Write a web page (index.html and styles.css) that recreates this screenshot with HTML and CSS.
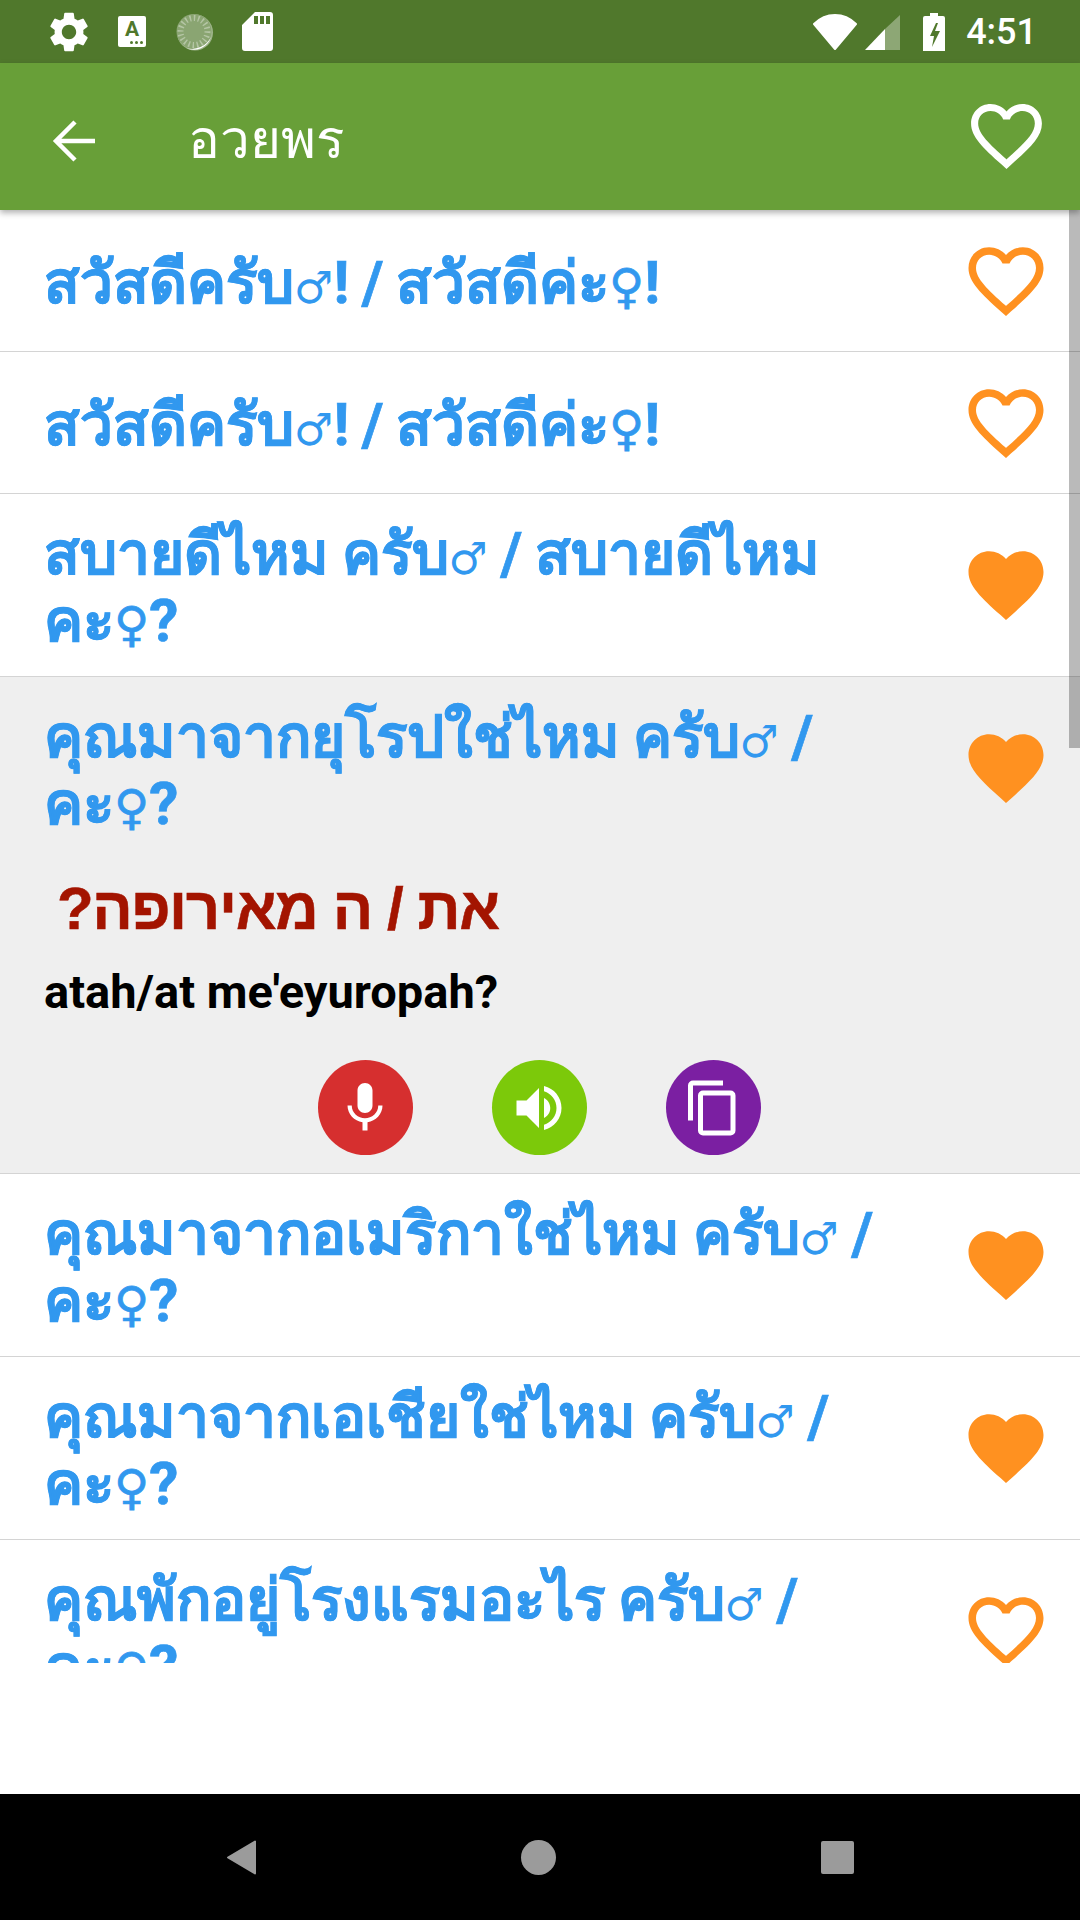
FILE: index.html
```html
<!DOCTYPE html>
<html lang="th">
<head>
    <meta charset="UTF-8">
    <meta name="viewport" content="width=device-width, initial-scale=1.0">
    <title>อวยพร</title>
    <link rel="stylesheet" href="styles.css">
</head>
<body>
    <div class="screen">
        <div class="status-bar">
            <div class="status-left">
                <svg class="gear" viewBox="2.500 2 19 20"><path d="M19.140 12.940c.04-.3.06-.61.06-.94 0-.32-.02-.64-.07-.94l2.030-1.580a.49.49 0 0 0 .12-.61l-1.920-3.320a.49.49 0 0 0-.59-.22l-2.390.96c-.5-.38-1.030-.7-1.620-.94l-.36-2.540a.48.48 0 0 0-.48-.41h-3.840c-.24 0-.43.17-.47.41l-.36 2.540c-.59.24-1.130.57-1.620.94l-2.390-.96c-.22-.08-.47 0-.59.22L2.740 8.870c-.12.21-.08.47.12.61l2.030 1.580c-.05.3-.09.63-.09.94s.02.64.07.94l-2.030 1.580a.49.49 0 0 0-.12.61l1.920 3.320c.12.22.37.29.59.22l2.390-.96c.5.38 1.030.7 1.620.94l.36 2.540c.05.24.24.41.48.41h3.840c.24 0 .44-.17.47-.41l.36-2.540c.59-.24 1.130-.56 1.620-.94l2.390.96c.22.08.47 0 .59-.22l1.920-3.320c.12-.22.07-.47-.12-.61l-2.010-1.580zM12 15.600c-1.980 0-3.600-1.620-3.600-3.600s1.620-3.600 3.600-3.600 3.600 1.620 3.600 3.600-1.620 3.600-3.600 3.600z"/></svg>
                <div class="a-icon">A<svg class="a-dots" viewBox="0 0 13 3"><circle cx="1.500" cy="1.500" r="1.500"/><circle cx="6.500" cy="1.500" r="1.500"/><circle cx="11.500" cy="1.500" r="1.500"/></svg></div>
                <svg class="loader" viewBox="0 0 38 38">
                    <circle cx="19" cy="19.500" r="18" fill="#fff" opacity=".45"/>
                    <circle cx="18" cy="18.500" r="17.500" fill="#8aa572"/>
                    <circle cx="18" cy="18.500" r="13.500" fill="none" stroke="#b4c5a4" stroke-width="6" stroke-dasharray="1.500 2.700"/>
                    <path d="M35 24a18 18 0 0 1-25 11 21 21 0 0 0 25-11z" fill="#fff"/>
                </svg>
                <svg class="sd-card" viewBox="0 0 31 39"><path fill-rule="evenodd" d="M13 0h15a3 3 0 0 1 3 3v33a3 3 0 0 1-3 3H3a3 3 0 0 1-3-3V13zM12 4v8h4V4zm6 0v8h4V4zm6 0v8h4V4z"/></svg>
            </div>
            <div class="status-right">
                <svg class="wifi" viewBox="0 0 44 36"><path d="M22 35 1 10C7 4 14 1 22 1s15 3 21 9z" stroke="#fff" stroke-width="2" stroke-linejoin="round"/></svg>
                <svg class="signal" viewBox="0 0 35 35"><path d="M35 0v35H20V14z" opacity=".35"/><path d="M20 14v21H0z"/></svg>
                <svg class="battery" viewBox="0 0 22 38"><path fill-rule="evenodd" d="M7 0h8v3h5a2 2 0 0 1 2 2v33H0V5a2 2 0 0 1 2-2h5zm6 10-6 13h4l-2 11 8-16h-5l3-8z"/></svg>
                <span class="clock">4:51</span>
            </div>
        </div>

        <div class="toolbar">
            <svg class="back" viewBox="0 0 44 44"><path d="M43 22H5M23 3 4 22l19 19" fill="none" stroke="#fff" stroke-width="4.500"/></svg>
            <div class="title">อวยพร</div>
            <svg class="fav-all" viewBox="2 3 20 18.350"><use href="#heart-line"/></svg>
        </div>

        <div class="list">
            <div class="row">
                <div class="phrase">สวัสดีครับ<span class="male">♂</span>! / สวัสดีค่ะ<span class="female">♀</span>!</div>
                <svg class="heart" viewBox="0 0 24 24"><use href="#heart-line"/></svg>
            </div>
            <div class="row">
                <div class="phrase">สวัสดีครับ<span class="male">♂</span>! / สวัสดีค่ะ<span class="female">♀</span>!</div>
                <svg class="heart" viewBox="0 0 24 24"><use href="#heart-line"/></svg>
            </div>
            <div class="row">
                <div class="phrase">สบายดีไหม ครับ<span class="male">♂</span> / สบายดีไหม <span>คะ</span><span class="female">♀</span>?</div>
                <svg class="heart" viewBox="0 0 24 24"><use href="#heart-full"/></svg>
            </div>
            <div class="row-open">
                <div class="row row-head">
                    <div class="phrase">คุณมาจากยุโรปใช่ไหม ครับ<span class="male">♂</span> / <span>คะ</span><span class="female">♀</span>?</div>
                    <svg class="heart" viewBox="0 0 24 24"><use href="#heart-full"/></svg>
                </div>
                <div class="hebrew" dir="rtl">את / ה מאירופה?</div>
                <div class="translit">atah/at me'eyuropah?</div>
                <div class="actions">
                    <div class="action red">
                        <svg viewBox="0 0 24 24"><path d="M12 14c1.660 0 3-1.340 3-3V5c0-1.660-1.340-3-3-3S9 3.340 9 5v6c0 1.660 1.340 3 3 3zm5.300-3c0 3-2.540 5.100-5.300 5.100S6.700 14 6.700 11H5c0 3.410 2.720 6.230 6 6.720V21h2v-3.280c3.280-.48 6-3.300 6-6.720h-1.700z"/></svg>
                    </div>
                    <div class="action green">
                        <svg viewBox="0 0 24 24"><path d="M3 9v6h4l5 5V4L7 9H3zm13.500 3c0-1.770-1.020-3.290-2.500-4.030v8.050c1.480-.73 2.500-2.250 2.500-4.020zM14 3.230v2.060c2.890.86 5 3.540 5 6.710s-2.110 5.850-5 6.710v2.060c4.010-.91 7-4.490 7-8.770s-2.990-7.860-7-8.770z"/></svg>
                    </div>
                    <div class="action purple">
                        <svg viewBox="0 0 24 24"><path d="M16 1H4a2 2 0 0 0-2 2v14h2V3h12V1zm3 4H8a2 2 0 0 0-2 2v14a2 2 0 0 0 2 2h11a2 2 0 0 0 2-2V7a2 2 0 0 0-2-2zm0 16H8V7h11v14z"/></svg>
                    </div>
                </div>
            </div>
            <div class="row">
                <div class="phrase">คุณมาจากอเมริกาใช่ไหม ครับ<span class="male">♂</span> / <span>คะ</span><span class="female">♀</span>?</div>
                <svg class="heart" viewBox="0 0 24 24"><use href="#heart-full"/></svg>
            </div>
            <div class="row">
                <div class="phrase">คุณมาจากเอเชียใช่ไหม ครับ<span class="male">♂</span> / <span>คะ</span><span class="female">♀</span>?</div>
                <svg class="heart" viewBox="0 0 24 24"><use href="#heart-full"/></svg>
            </div>
            <div class="row">
                <div class="phrase">คุณพักอยู่โรงแรมอะไร ครับ<span class="male">♂</span> / <span>คะ</span><span class="female">♀</span>?</div>
                <svg class="heart" viewBox="0 0 24 24"><use href="#heart-line"/></svg>
            </div>
            <div class="scrollbar"></div>
        </div>

        <div class="spacer"></div>

        <div class="nav-bar">
            <svg class="nav-icon" viewBox="0 0 30 35"><path d="M29 1.500v32L2 17.500z" fill="#9b9b9b" stroke="#9b9b9b" stroke-width="2" stroke-linejoin="round"/></svg>
            <div class="nav-home"></div>
            <div class="nav-recent"></div>
        </div>
    </div>

    <svg class="defs" width="0" height="0">
        <defs>
            <path id="heart-line" d="M16.500 3c-1.740 0-3.410.81-4.500 2.090C10.910 3.810 9.240 3 7.500 3 4.420 3 2 5.420 2 8.500c0 3.780 3.400 6.860 8.550 11.540L12 21.350l1.450-1.320C18.600 15.360 22 12.280 22 8.500 22 5.420 19.580 3 16.500 3zm-4.400 15.550l-.1.100-.1-.1C7.140 14.240 4 11.390 4 8.500 4 6.500 5.500 5 7.500 5c1.540 0 3.040.99 3.570 2.360h1.870C13.460 5.990 14.960 5 16.500 5c2 0 3.500 1.500 3.500 3.500 0 2.890-3.140 5.740-7.900 10.050z"/>
            <path id="heart-full" d="M12 21.350l-1.450-1.320C5.400 15.360 2 12.280 2 8.500 2 5.420 4.420 3 7.500 3c1.740 0 3.410.81 4.500 2.090C13.090 3.810 14.760 3 16.500 3 19.580 3 22 5.420 22 8.500c0 3.780-3.400 6.860-8.550 11.540L12 21.350z"/>
        </defs>
    </svg>
</body>
</html>
```

FILE: styles.css
```css
body {
    margin: 0;
    font-family: 'Roboto', 'Noto Sans', 'DejaVu Sans', sans-serif;
    background-color: #fff;
}

.screen {
    width: 1080px;
    height: 1920px;
    display: flex;
    flex-direction: column;
    overflow: hidden;
}

.status-bar {
    height: 63px;
    flex: none;
    display: flex;
    justify-content: space-between;
    align-items: center;
    padding: 0 43px 0 50px;
    background-color: #50782c;
}

.status-left,
.status-right {
    display: flex;
    align-items: center;
}

.status-left {
    gap: 30px;
    fill: #fff;
}

.status-right {
    gap: 8px;
    fill: #fff;
}

.gear {
    width: 38px;
    height: 40px;
}

.a-icon {
    position: relative;
    width: 28px;
    height: 31px;
    background-color: #fff;
    border-radius: 2px;
    color: #50782c;
    font-size: 21px;
    font-weight: bold;
    line-height: 26px;
    text-align: center;
}

.a-dots {
    position: absolute;
    right: 3px;
    bottom: 3px;
    width: 13px;
    height: 3px;
    fill: #50782c;
}

.loader {
    width: 38px;
    height: 38px;
    margin-right: -2px;
}

.sd-card {
    width: 31px;
    height: 39px;
}

.wifi {
    width: 44px;
    height: 36px;
}

.signal {
    width: 35px;
    height: 35px;
    margin-top: 2px;
}

.battery {
    width: 22px;
    height: 38px;
    margin-left: 15px;
}

.clock {
    margin-left: 13px;
    color: #fff;
    font-size: 36px;
    font-weight: 500;
}

.toolbar {
    height: 147px;
    flex: none;
    display: flex;
    align-items: center;
    padding: 0 38px 0 52px;
    background-color: #689f38;
    box-shadow: 0 3px 6px rgba(0, 0, 0, 0.3);
    position: relative;
}

.back {
    width: 44px;
    height: 44px;
    margin-top: 9px;
}

.title {
    flex: 1;
    margin-left: 92px;
    padding-top: 5px;
    color: #fff;
    font-size: 53px;
}

.fav-all {
    width: 71px;
    height: 65px;
    fill: #fff;
}

.list {
    height: 1453px;
    flex: none;
    overflow: hidden;
    position: relative;
}

.row {
    display: flex;
    align-items: center;
    min-height: 142px;
    padding: 24px 29px 24px 44px;
    border-bottom: 1px solid #d4d4d4;
    box-sizing: border-box;
}

.phrase {
    flex: 1;
    position: relative;
    top: 3px;
    color: #3198ef;
    font-size: 58.5px;
    font-weight: bold;
    line-height: 67px;
    word-spacing: -2px;
    -webkit-text-stroke: 0.7px #3198ef;
}

.male {
    font-family: 'DejaVu Sans', sans-serif;
    font-size: 44px;
    font-weight: normal;
    line-height: 0;
    -webkit-text-stroke: 0;
}

.female {
    font-size: 48px;
    line-height: 0;
}

.heart {
    width: 90px;
    height: 90px;
    flex: none;
    margin-left: 31px;
    fill: #ff9120;
}

.row-open {
    background-color: #efefef;
    border-bottom: 1px solid #d4d4d4;
}

.row-head {
    border-bottom: none;
}

.hebrew {
    width: fit-content;
    margin-top: 15px;
    margin-left: 57px;
    color: #a31400;
    font-family: 'Liberation Sans', sans-serif;
    font-size: 60px;
    font-weight: bold;
    line-height: 70px;
    letter-spacing: -1.4px;
    -webkit-text-stroke: 0.5px #a31400;
}

.translit {
    margin-top: 20px;
    padding: 0 44px;
    font-size: 47px;
    font-weight: bold;
    line-height: 56px;
    color: #000;
}

.actions {
    display: flex;
    justify-content: center;
    gap: 79px;
    padding: 40px 2px 18px 0;
}

.action {
    width: 95px;
    height: 95px;
    border-radius: 50%;
    display: flex;
    justify-content: center;
    align-items: center;
    fill: #fff;
}

.action svg {
    width: 60px;
    height: 60px;
}

.red {
    background-color: #d62f2f;
}

.green {
    background-color: #7cc90a;
}

.purple {
    background-color: #7b1fa2;
}

.scrollbar {
    position: absolute;
    top: 0;
    right: 0;
    width: 11px;
    height: 538px;
    background-color: rgba(0, 0, 0, 0.27);
}

.spacer {
    flex: 1;
}

.nav-bar {
    height: 126px;
    flex: none;
    display: flex;
    justify-content: space-between;
    align-items: center;
    padding: 0 226px;
    background-color: #000;
}

.nav-icon {
    width: 30px;
    height: 35px;
}

.nav-home {
    width: 35px;
    height: 35px;
    border-radius: 50%;
    background-color: #9b9b9b;
}

.nav-recent {
    width: 33px;
    height: 33px;
    border-radius: 2px;
    background-color: #9b9b9b;
}

.defs {
    position: absolute;
}
```
